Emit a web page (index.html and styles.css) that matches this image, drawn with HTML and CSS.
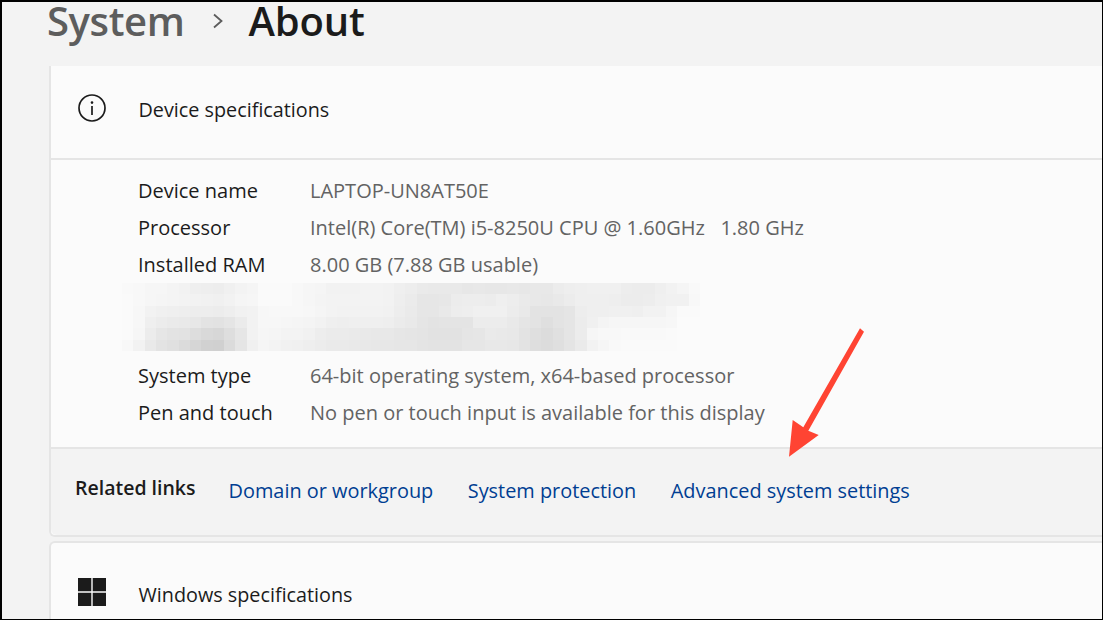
FILE: index.html
```html
<!DOCTYPE html>
<html lang="en">
<head>
<meta charset="utf-8">
<title>System › About</title>
<link rel="stylesheet" href="styles.css">
</head>
<body>
<div class="frame">
  <header class="crumbs">
    <span class="crumb-parent">System</span>
    <svg class="crumb-sep" viewBox="0 0 12 16" width="12" height="16"><path d="M2 1.5l7.5 6.500L2 14.500" fill="none" stroke="#5c5c5c" stroke-width="1.8"/></svg>
    <span class="crumb-current">About</span>
  </header>
  <section class="card">
    <div class="card-head">
      <svg class="head-icon" viewBox="0 0 28 28" width="28" height="28"><circle cx="14" cy="14" r="13" fill="none" stroke="#1b1b1b" stroke-width="1.7"/><circle cx="14" cy="8.6" r="1.3" fill="#1b1b1b"/><path d="M14 12v9" stroke="#1b1b1b" stroke-width="1.7"/></svg>
      <h2 class="head-title">Device specifications</h2>
    </div>
    <div class="specs">
      <div class="spec"><span class="spec-label">Device name</span><span class="spec-value">LAPTOP-UN8AT50E</span></div>
      <div class="spec"><span class="spec-label">Processor</span><span class="spec-value">Intel(R) Core(TM) i5-8250U CPU @ 1.60GHz&nbsp;&nbsp; 1.80 GHz</span></div>
      <div class="spec"><span class="spec-label">Installed RAM</span><span class="spec-value">8.00 GB (7.88 GB usable)</span></div>
      <div class="blur-slot"><div class="blur" id="blur"></div></div>
      <div class="spec"><span class="spec-label">System type</span><span class="spec-value">64-bit operating system, x64-based processor</span></div>
      <div class="spec"><span class="spec-label">Pen and touch</span><span class="spec-value">No pen or touch input is available for this display</span></div>
    </div>
    <nav class="links">
      <span class="links-title">Related links</span>
      <a class="link" href="#">Domain or workgroup</a>
      <a class="link" href="#">System protection</a>
      <a class="link" href="#">Advanced system settings</a>
    </nav>
  </section>
  <section class="card card-next">
    <div class="card-head">
      <svg class="head-icon" viewBox="0 0 28 28" width="28" height="28"><path fill="#1b1b1b" d="M0 0h13.300v13.300H0zM14.700 0H28v13.300H14.700zM0 14.700h13.300V28H0zM14.700 14.700H28V28H14.700z"/></svg>
      <h2 class="head-title">Windows specifications</h2>
    </div>
  </section>
  <svg class="arrow" viewBox="0 0 80 132" width="80" height="132"><path fill="#ff4433" d="M73 1.300L77 4.700L21.300 103.700L31.700 108L2 129.700L5.700 93L16.300 100.300Z"/></svg>
</div>
<script src="blur.js"></script>
</body>
</html>
```
FILE: styles.css
```css
* { box-sizing: border-box; }
html, body { margin: 0; padding: 0; }
body { font-family: "Open Sans", "Noto Sans", sans-serif; overflow: hidden; }
.frame {
  position: relative;
  width: 1103px;
  height: 620px;
  overflow: hidden;
  background: #f3f3f3;
  border-style: solid;
  border-color: #000;
  border-width: 2px 1px 1px 2px;
  padding: 0 0 0 47px;
}
.crumbs { display: flex; align-items: center; height: 64px; padding-bottom: 26px; }
.crumb-parent { margin-left: -2px; font-size: 40px; line-height: 36px; font-weight: 600; color: #5d5d5d; letter-spacing: -0.4px; }
.crumb-sep { margin: 0 25px 0 27px; }
.crumb-current { font-size: 40px; line-height: 36px; font-weight: 600; color: #1b1b1b; letter-spacing: -0.2px; }
.card {
  width: 1100px;
  background: #fbfbfb;
  border: 2px solid #e5e5e5;
  border-width: 0 0 2px 2px;
  border-radius: 0 0 6px 6px;
}
.card-head { display: flex; align-items: center; height: 94px; padding: 0 0 8px 27px; border-bottom: 2px solid #e5e5e5; }
.head-icon { flex: none; }
.head-title { margin: 3px 0 0 32.500px; font-size: 19.800px; font-weight: 400; color: #1b1b1b; }
.specs { padding: 12px 0 16px 87px; }
.spec { display: flex; align-items: center; height: 37px; font-size: 20px; }
.spec-label { width: 172px; flex: none; color: #1b1b1b; }
.spec-value { color: #636363; }
.blur-slot { height: 74px; margin-left: -16px; }
.blur {
  display: grid;
  grid-template-columns: repeat(51, 1fr);
  grid-template-rows: repeat(6, 1fr);
  width: 578px;
  height: 68px;
}
.links {
  display: flex;
  align-items: center;
  height: 88px;
  padding: 0 0 4px 24px;
  background: #f3f3f3;
  border-top: 2px solid #e5e5e5;
  border-radius: 0 0 6px 6px;
  gap: 34.500px;
}
.links-title { font-size: 19.500px; font-weight: 600; color: #1b1b1b; margin: -5px -1.500px 0 0; }
.link { font-size: 19.900px; color: #003e92; text-decoration: none; }
.card-next { margin-top: 4px; border-width: 2px 0 0 2px; border-radius: 6px 0 0 0; }
.card-next .card-head { border-bottom: 0; padding: 35px 0 0 27px; align-items: flex-start; height: 100px; }
.arrow { position: absolute; left: 785px; top: 325px; }
```
FILE: blur.js
```js
var rows = [
  "f9f8f6f6f4f2efeeedf0f3f5fafafaf8f6f5f2f2f2f3f3f2efed" + "eae9e9e9e7e8e7e7e8e7e8e8eceeeff0f0f0edececeff2f5f9",
  "faf8f6f5f4f3f2f1f0f2f5f6fafafaf8f6f4f3f3f3f3f3f2eeeb" + "e6e6e7ecededecefedeae8e7e9eceFefefeeececedf0f1f1f8",
  "faf7f2f0efeeededeceef1f2f7f8f8f8f7f5f3f2f2f2f2f1edea" + "e6e6e9edeef0f0f0ece9e3e3e3e5edefeff0f0eff2f2f6fafa",
  "faf7efecEae9e7e3e2e5ebf2f7f7f6f5f4f2efeeefefefeeebe9" + "e5e3e4e4e4ececece9e5e3dfe3e5ecf0f4f6f6f6f6f6f7fbfb",
  "faf6ece6e3e2ddd9d7dee6f2f6f5f3f3f1edebebeae9e8e8e6e5" + "e4e2e2e2e5e6eae9e8e3dfdce0e5ecf6f8f8f9f9f9f9fafbfb",
  "f8f2e9e3e0dbd6d1d0dbe5f0f5f3f1f0eeeceaeae9e8e7e7e6e6" + "e4e3e3e3e6e6e8e8e7e3dedcdfe4eaf2f6f9fafafafafafbfb"
];
var blur = document.getElementById("blur");
rows.forEach(function (row) {
  for (var i = 0; i < 51; i++) {
    var hex = row.substr(i * 2, 2);
    var cell = document.createElement("span");
    cell.style.background = "#" + hex + hex + hex;
    blur.appendChild(cell);
  }
});
```
